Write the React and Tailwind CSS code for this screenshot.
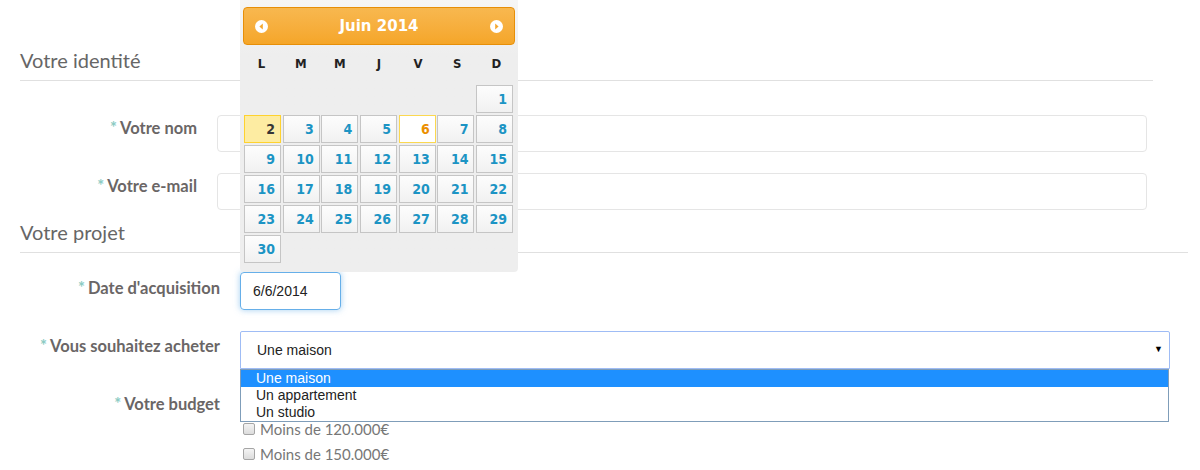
import React from "react";

const labelFont = { fontFamily: "Lato, 'Open Sans', sans-serif" };

const weeks = [
  [null, null, null, null, null, null, 1],
  [2, 3, 4, 5, 6, 7, 8],
  [9, 10, 11, 12, 13, 14, 15],
  [16, 17, 18, 19, 20, 21, 22],
  [23, 24, 25, 26, 27, 28, 29],
  [30, null, null, null, null, null, null],
];

function Label({ children }) {
  return (
    <span className="text-[16.5px] font-bold text-[#6a6666]">
      <span className="text-[#8ccbc3] mr-[3px]">*</span>
      {children}
    </span>
  );
}

function NavIcon({ dir }) {
  return (
    <svg width="13" height="13" viewBox="0 0 13 13">
      <circle cx="6.5" cy="6.5" r="6.5" fill="#fff" />
      {dir === "prev" ? (
        <path d="M7.8 3.6 L4.4 6.5 L7.8 9.4 Z" fill="#f5a830" />
      ) : (
        <path d="M5.2 3.6 L8.6 6.5 L5.2 9.4 Z" fill="#f5a830" />
      )}
    </svg>
  );
}

function DayCell({ day }) {
  if (day === null) return <div className="h-[28px]" />;
  let cls =
    "border-[#c5c5c5] bg-gradient-to-b from-[#fdfdfd] to-[#f1f1f1] text-[#1c94c4]";
  if (day === 2) cls = "border-[#fed22f] bg-[#fdeca2] text-[#363636]";
  if (day === 6) cls = "border-[#fbd850] bg-white text-[#eb8f00]";
  return (
    <div
      className={
        "h-[28px] border text-right pr-[5px] leading-[26px] text-[14px] font-bold " +
        cls
      }
    >
      {day}
    </div>
  );
}

function Calendar() {
  return (
    <div
      className="absolute left-[240px] top-0 w-[278px] h-[272px] bg-gradient-to-b from-[#f6f6f6] to-[#eeeeee] to-[20%] rounded-b-[4px] px-[3px] pt-[7px]"
      style={{ fontFamily: "'DejaVu Sans', Verdana, sans-serif" }}
    >
      <div className="h-[38px] rounded-[4px] border border-[#e78f08] bg-gradient-to-b from-[#f8b84f] to-[#f5a628] flex items-center justify-between px-[11px]">
        <NavIcon dir="prev" />
        <span className="text-white font-bold text-[15px]">Juin 2014</span>
        <NavIcon dir="next" />
      </div>
      <div style={{ fontStretch: "condensed" }}>
        <div className="grid grid-cols-7 gap-x-[2px] mt-[8px] mb-[10px] text-[13px] font-bold text-[#222] text-center">
          {["L", "M", "M", "J", "V", "S", "D"].map((d, i) => (
            <div key={i} className="leading-[22px]">
              {d}
            </div>
          ))}
        </div>
        <div className="grid grid-cols-[repeat(7,37px)] gap-x-[1.7px] gap-y-[2px] pl-[1px]">
          {weeks.flat().map((d, i) => (
            <DayCell key={i} day={d} />
          ))}
        </div>
      </div>
    </div>
  );
}

export default function App() {
  return (
    <div className="relative w-[1200px] h-[470px] bg-white overflow-hidden" style={labelFont}>
      {/* Votre identité */}
      <div className="w-[1133px] ml-[20px] pt-[46px]">
        <h2 className="text-[20px] leading-[28px] text-[#666] pb-[6px] border-b border-[#e0e0e0]">
          Votre identité
        </h2>
        <div className="mt-[34px] flex items-center h-[37px]">
          <div className="w-[177px] text-right pb-[10px]">
            <Label>Votre nom</Label>
          </div>
          <div className="ml-[20px] w-[930px] h-[37px] border border-[#e5e5e5] rounded-[4px]" />
        </div>
        <div className="mt-[21px] flex items-center h-[37px]">
          <div className="w-[177px] text-right pb-[11px]">
            <Label>Votre e-mail</Label>
          </div>
          <div className="ml-[20px] w-[930px] h-[37px] border border-[#e5e5e5] rounded-[4px]" />
        </div>
      </div>

      {/* Votre projet */}
      <div className="w-[1168px] ml-[20px] mt-[8px]">
        <h2 className="text-[20px] leading-[28px] text-[#666] pb-[6px] border-b border-[#e0e0e0]">
          Votre projet
        </h2>
        <div className="mt-[19px] flex items-start">
          <div className="w-[200px] text-right pt-[4px]">
            <Label>Date d'acquisition</Label>
          </div>
          <div
            className="ml-[20px] w-[101px] h-[38px] border border-[#66afe9] rounded-[4px] shadow-[0_0_6px_rgba(102,175,233,0.6)] flex items-center pl-[12px] text-[14px] text-[#222]"
            style={{ fontFamily: "'Liberation Sans', Arial, sans-serif" }}
          >
            6/6/2014
          </div>
        </div>
        <div className="mt-[21px] flex items-start">
          <div className="w-[200px] text-right pt-[3px]">
            <Label>Vous souhaitez acheter</Label>
          </div>
          <div
            className="relative ml-[20px] w-[930px] text-[14px] text-[#222]"
            style={{ fontFamily: "'Liberation Sans', Arial, sans-serif" }}
          >
            <div className="h-[38px] border border-[#9fbcf5] rounded-t-[2px] flex items-center justify-between pl-[16px] pr-[6px]">
              <span>Une maison</span>
              <span className="text-[9px] text-black">▼</span>
            </div>
            <div className="absolute left-0 top-[38px] w-[929px] border border-[#7f9db9] bg-white leading-[17px] z-10">
              <div className="bg-[#1e90ff] text-white pl-[15px]">Une maison</div>
              <div className="pl-[15px]">Un appartement</div>
              <div className="pl-[15px]">Un studio</div>
            </div>
          </div>
        </div>
        <div className="flex items-start mt-[21px]">
          <div className="w-[200px] text-right pt-[2px]">
            <Label>Votre budget</Label>
          </div>
          <div className="ml-[20px] pt-[29px] text-[15px] text-[#777]">
            <div className="flex items-center gap-[5px] h-[20px] pl-[3px]">
              <span className="w-[12px] h-[12px] rounded-[2px] border border-[#a5a5a5] bg-gradient-to-b from-[#f4f4f4] to-[#dcdcdc]" />
              <span>Moins de 120.000€</span>
            </div>
            <div className="flex items-center gap-[5px] h-[20px] pl-[3px] mt-[5px]">
              <span className="w-[12px] h-[12px] rounded-[2px] border border-[#a5a5a5] bg-gradient-to-b from-[#f4f4f4] to-[#dcdcdc]" />
              <span>Moins de 150.000€</span>
            </div>
          </div>
        </div>
      </div>

      <Calendar />
    </div>
  );
}
